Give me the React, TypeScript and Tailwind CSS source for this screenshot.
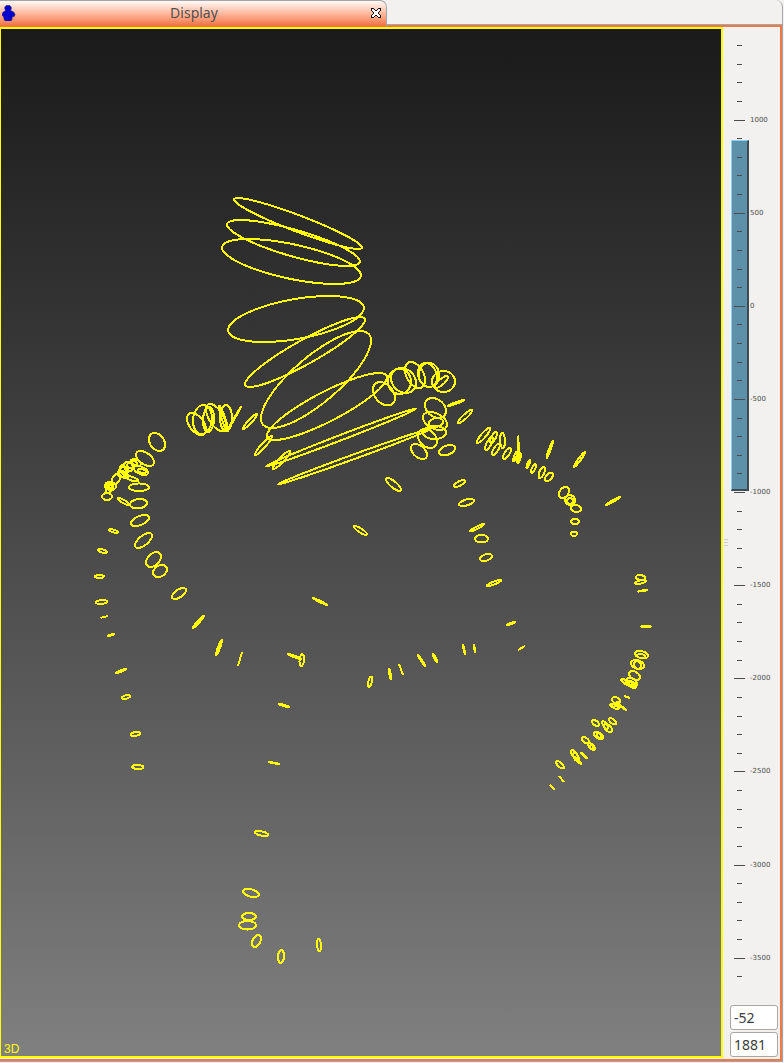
import { useState } from "react";

// Projected contour: left, top, right, bottom of its bounds, and the slant
// (-1 rises to the right, 1 falls to the right, 0 is upright).
type Contour = [number, number, number, number, number];

const head: Contour[] = [
  [234, 198, 362, 249, 0.94],
  [227, 220, 360, 266, 0.8],
  [222, 239, 361, 284, 0.62],
  [228, 296, 364, 342, -0.48],
  [245, 317, 365, 387, -0.92],
  [261, 331, 371, 428, -0.8],
  [267, 373, 387, 440, -0.87],
  [267, 409, 415, 466, -0.995],
  [279, 429, 430, 484, -0.996],
];

const rightShoulder: Contour[] = [
  [373, 382, 395, 405.5, 0.35],
  [388, 369, 411, 394, 0],
  [391, 368, 416, 393, 0.2],
  [405, 362, 425, 388, 0.4],
  [418, 363, 437, 387, 0.2],
  [419, 363, 439, 387, 0],
  [432, 371, 455, 392, 0],
  [435, 376, 448, 388, -0.8],
  [425, 398, 446, 418, 0.3],
  [423, 412, 447, 430, 0.4],
  [429, 418, 443, 427, -0.2],
  [423, 426, 446, 439, 0],
  [418, 429, 437, 448, 0.3],
  [411, 444, 427, 459, 0.45],
  [439, 445, 455, 455.5, -0.4],
  [448, 400, 464, 406, -0.96],
  [458, 410, 472, 423, -0.9],
  [477, 428, 490, 443, -0.88],
  [490, 432, 497, 443, -0.7],
  [485, 437, 493, 450, -0.75],
  [492, 443.5, 500, 455, -0.75],
  [500, 433, 505, 448, 0.1],
  [503, 448, 511, 459, -0.7],
  [513, 452, 517, 461.5, -0.8],
  [518, 437, 519, 462, 0.8],
  [517, 453, 521, 463, -0.6],
  [526.5, 460, 530, 468.5, -0.8],
  [531, 464, 536, 473, -0.7],
  [538.5, 467, 545, 478, -0.6],
  [545, 472.5, 553, 481, -0.5],
  [546.5, 441, 553, 458, -0.96],
  [574, 452, 585, 467, -0.96],
  [559, 487, 569, 498, -0.3],
  [565, 495, 575, 505, 0.1],
  [567, 498, 573, 504, 0],
  [571, 505, 581, 512, 0.1],
  [571, 519, 579, 524, 0],
  [571, 531.5, 577, 536, 0],
  [606, 497, 620, 505, -0.97],
];

const torso: Contour[] = [
  [386, 478, 401, 491, 0.8],
  [454, 480, 465, 487, -0.7],
  [459, 499, 474, 506, -0.5],
  [470, 524, 484, 531.5, -0.94],
  [475, 535, 488, 542.5, 0],
  [354, 526, 367, 535, 0.85],
  [480, 554, 492, 561, -0.4],
  [487, 580, 501, 586, -0.86],
  [313, 598, 327, 605, 0.98],
  [507, 622, 515, 625, -0.85],
  [518, 646, 525, 650, -1],
  [299.5, 654, 304, 666, -0.2],
  [368, 676.5, 372, 687, -0.5],
  [389, 669, 391, 679, 0.7],
  [399, 664, 403, 675, 1],
  [418, 655, 425, 666, 0.98],
  [433, 654, 437, 662, 0.9],
  [463, 645, 465, 654, 0.95],
  [474, 645, 475, 652, 0.95],
  [172, 588, 186, 599, -0.6],
  [193, 615.5, 204, 628, -0.97],
  [216, 640, 222, 655, -0.93],
  [238, 652, 242, 666, -1],
  [288, 654, 301, 659, 0.95],
];

const leftShoulder: Contour[] = [
  [187, 413, 206, 435, 0.5],
  [193, 405, 212, 434, -0.1],
  [203, 407, 214, 432, -0.1],
  [206, 404, 226, 431, 0.6],
  [220, 405, 232, 431, 0],
  [219, 406, 228, 431, 0.9],
  [227, 407, 241, 431, -0.998],
  [243, 414, 257, 429, -0.94],
  [255, 436, 272, 455, -0.94],
  [273, 451, 290, 469, -0.92],
  [149, 433, 165, 451, 0.3],
  [136, 451, 154, 466, 0.5],
  [102, 493, 112, 500, 0],
  [105, 482, 116, 490, 0.1],
  [107, 483, 113, 488, 0],
  [112, 474, 120, 484, -0.3],
  [118, 467, 128, 477, -0.3],
  [120, 465, 126, 474, 0.2],
  [124, 462, 133, 471, 0.2],
  [119, 471, 128, 478, 0.5],
  [131, 459, 141, 466, 0.4],
  [127, 461, 137, 468, -0.3],
  [134, 466, 148, 475, 0.5],
  [138, 469, 146, 473, 0.4],
  [106, 485, 113, 493, -0.5],
  [126, 476, 138, 481.5, 0.7],
  [129, 483.5, 149, 491, 0],
  [118, 498, 129, 505, 0.85],
  [130, 499, 147, 508.5, -0.15],
  [131, 515, 149, 526, -0.5],
  [135, 533, 152, 548, -0.65],
  [146, 552, 161, 567, -0.4],
  [153, 565, 167, 577, -0.3],
];

const arms: Contour[] = [
  [109, 529, 118, 533, 0.7],
  [98, 549, 107, 553, 0.6],
  [95, 575, 104, 578, -0.1],
  [96, 600, 107, 604, -0.2],
  [100.5, 616, 108, 618, -1],
  [107.5, 634, 114, 636, -0.9],
  [116, 669, 126, 673, -0.9],
  [122, 695, 130, 699, -0.4],
  [131, 732, 140, 736, -0.3],
  [132, 765, 143.5, 769, 0.1],
  [636, 575, 645, 580, 0.2],
  [635, 580, 646, 584, -0.6],
  [638, 590, 647, 591.5, -0.9],
  [641.5, 626, 650.5, 627, 0],
  [635, 651, 648, 658.5, 0.3],
  [637, 654, 645, 658, 0.2],
  [631, 660, 644, 669, 0.3],
  [634, 661, 641, 669, 0.2],
  [629, 671, 640, 680, 0.4],
  [621, 679, 636, 688, 0.85],
  [626, 678, 637, 687, 0.3],
  [628, 681, 636, 686, 0.6],
  [624, 696, 630, 698, 1],
  [612, 697, 620, 703.5, 0.3],
  [610, 704, 619, 709, 0.7],
  [612, 702, 619, 707, -0.7],
  [618, 704, 626, 710, 0.98],
  [592, 720, 599, 726, 0.5],
  [602, 721, 608, 729, 0.7],
  [604, 724, 612, 732, 0.5],
  [609, 718, 616, 724.5, 0.6],
  [594, 732, 603, 739, 0.5],
  [597, 733, 601, 738, 0.2],
  [582, 737, 589, 743.5, 0.5],
  [588, 743, 595, 750, 0.7],
  [590, 745, 593, 749, 0.2],
  [571, 750, 578, 759, 0.7],
  [573, 753, 579, 761, 0.5],
  [575, 757, 581, 764, 0.95],
  [581, 753, 587, 758, 0.95],
  [556, 761, 564, 768.5, 0.7],
  [559, 776, 564, 782, 1],
  [550, 785, 555, 790, 1],
];

const legs: Contour[] = [
  [279, 704, 289, 707, 0.9],
  [269, 762, 279, 764, 0.95],
  [255, 831, 268, 836, 0.5],
  [243, 889, 259, 897, 0.4],
  [242, 913, 256, 920, 0],
  [239, 921, 256, 929.5, 0],
  [252, 935, 261, 947, -0.4],
  [278, 950, 284, 963, -0.1],
  [317, 939, 321, 951, 0.2],
];

const contours = [...head, ...rightShoulder, ...torso, ...leftShoulder, ...arms, ...legs];

function contourPath([x0, y0, x1, y1, slant]: Contour) {
  const cx = (x0 + x1) / 2;
  const cy = (y0 + y1) / 2;
  const w = (x1 - x0) / 2;
  const h = (y1 - y0) / 2;
  const steps = 48;
  const phase = Math.acos(slant);
  const points = Array.from({ length: steps }, (_, i) => {
    const t = (i / steps) * Math.PI * 2;
    return `${(cx + w * Math.cos(t)).toFixed(2)} ${(cy + h * Math.cos(t - phase)).toFixed(2)}`;
  });
  return `M${points.join("L")}Z`;
}

const ticks = Array.from({ length: 51 }, (_, i) => 1400 - i * 100);

function TabBar() {
  return (
    <header className="flex h-[25px] shrink-0 pr-px font-['Noto_Sans',sans-serif]">
      <div
        role="tab"
        aria-selected="true"
        className="z-10 -mb-px flex w-[387px] items-center rounded-tr-[7px] border-t border-r border-[#a5a4a8] bg-linear-to-b from-[#fffaf8] to-[#f0713e] pb-0.5 pl-0.5"
      >
        <svg viewBox="0 0 14 16" className="h-4 w-3.5" aria-hidden="true">
          <path
            d="M4.2 0.5h3.6l1.4 1.6v2l-0.8 1.4 3.2 1.4 1.4 2.6-0.6 1.8-2 0.4-0.6 3-1 1.3H3.4l-1.2-1.3-0.5-3-1.4-1L0 8.9l1.2-1.8 2.6-1.6-1-1.6V2z"
            fill="#0202cf"
            stroke="#1b1b78"
            strokeWidth="0.6"
          />
        </svg>
        <span className="flex-1 pl-0.5 text-center text-sm text-[#55504e]">Display</span>
        <button type="button" aria-label="Close Display" className="mr-1 flex size-3 items-center justify-center">
          <svg viewBox="0 0 12 12" className="size-3" shapeRendering="crispEdges" aria-hidden="true">
            <path
              d="M1 1h3v1h1v1h2v-1h1v-1h3v3h-1v1h-1v2h1v1h1v3h-3v-1h-1v-1h-2v1h-1v1h-3v-3h1v-1h1v-2h-1v-1h-1z"
              fill="#111"
            />
            <path d="M2 2h2v1h1v1h2v-1h1v-1h2v2h-1v1h-1v2h1v1h1v2h-2v-1h-1v-1h-2v1h-1v1h-2v-2h1v-1h1v-2h-1v-1h-1z" fill="#fff" />
          </svg>
        </button>
      </div>
      <div className="flex-1 rounded-tr-[7px] border-r border-b border-[#a5a4a8]" />
    </header>
  );
}

function Viewport() {
  return (
    <section
      aria-label="3D view"
      className="grid min-w-0 flex-1 border-y-2 border-r-2 border-l border-[#ffff00] bg-linear-to-b from-[#1a1a1a] to-[#808080]"
    >
      <svg viewBox="1 29 720 1027" className="col-start-1 row-start-1 h-full min-h-0 w-full" shapeRendering="crispEdges" role="img" aria-label="Contours">
        <g fill="none" stroke="#ffff00" strokeWidth="2">
          {contours.map((c, i) => (
            <path key={i} d={contourPath(c)} />
          ))}
        </g>
      </svg>
      <span className="col-start-1 row-start-1 self-end pl-[3px] font-['Liberation_Sans',sans-serif] text-xs leading-[14px] text-[#ffff00]">
        3D
      </span>
    </section>
  );
}

function Scale() {
  const [level, setLevel] = useState(-52);
  const [span, setSpan] = useState("1881");
  const field =
    "h-[25px] w-full rounded-[3px] border border-[#a9a6a3] bg-white px-[3px] font-['Noto_Sans',sans-serif] text-sm text-[#3c3c3c] outline-none";
  return (
    <aside className="flex w-[57px] shrink-0">
      <div role="separator" aria-orientation="vertical" className="flex w-[7px] flex-col items-start justify-center gap-0.5 pl-px">
        <i className="h-px w-1 bg-[#cfcdcb]" />
        <i className="h-px w-1 bg-[#cfcdcb]" />
        <i className="h-px w-1 bg-[#cfcdcb]" />
      </div>
      <div className="flex min-w-0 flex-1 flex-col pr-0.5 pb-px">
        <div className="grid min-h-0 flex-1">
          <input
            type="range"
            aria-label="Level"
            min={-2786}
            max={554}
            value={level}
            onChange={(e) => setLevel(Number(e.target.value))}
            className="col-start-1 row-start-1 ml-px h-full w-[18px] appearance-none bg-transparent outline-none [direction:rtl] [writing-mode:vertical-lr] [&::-webkit-slider-thumb]:h-[351px] [&::-webkit-slider-thumb]:w-[18px] [&::-webkit-slider-thumb]:appearance-none [&::-webkit-slider-thumb]:border-t [&::-webkit-slider-thumb]:border-r-2 [&::-webkit-slider-thumb]:border-b-2 [&::-webkit-slider-thumb]:border-l [&::-webkit-slider-thumb]:border-t-[#8ad0f5] [&::-webkit-slider-thumb]:border-r-[#3d4b52] [&::-webkit-slider-thumb]:border-b-[#3d4b52] [&::-webkit-slider-thumb]:border-l-[#8ad0f5] [&::-webkit-slider-thumb]:bg-[#5c91a9]"
          />
          <div className="pointer-events-none col-start-1 row-start-1 flex flex-col justify-between pt-[18px] pb-[22px] pl-1">
            {ticks.map((t) => (
              <div key={t} className="flex h-px items-center gap-[5px]">
                <div className="flex w-[11px] justify-center">
                  <i className={t % 500 === 0 ? "h-px w-[11px] bg-[#4c4c4c]" : "h-px w-[5px] bg-[#4c4c4c]"} />
                </div>
                {t % 500 === 0 && (
                  <span className="font-['DejaVu_Sans',sans-serif] text-[7px] leading-none text-[#4c4c4c]">{t}</span>
                )}
              </div>
            ))}
          </div>
        </div>
        <div className="flex flex-col gap-0.5 pt-[5px]">
          <input
            aria-label="Level value"
            className={field}
            value={level}
            onChange={(e) => setLevel(Number(e.target.value) || 0)}
          />
          <input aria-label="Window value" className={field} value={span} onChange={(e) => setSpan(e.target.value)} />
        </div>
      </div>
    </aside>
  );
}

export default function App() {
  return (
    <div className="flex h-screen flex-col bg-[#f2f1f0] pb-px">
      <TabBar />
      <div className="mr-px flex min-h-0 flex-1 border-r border-b border-[#a5a4a8]">
        <main className="flex min-w-0 flex-1 border-y-2 border-r-2 border-[#f07746] pb-px">
          <Viewport />
          <Scale />
        </main>
      </div>
    </div>
  );
}
